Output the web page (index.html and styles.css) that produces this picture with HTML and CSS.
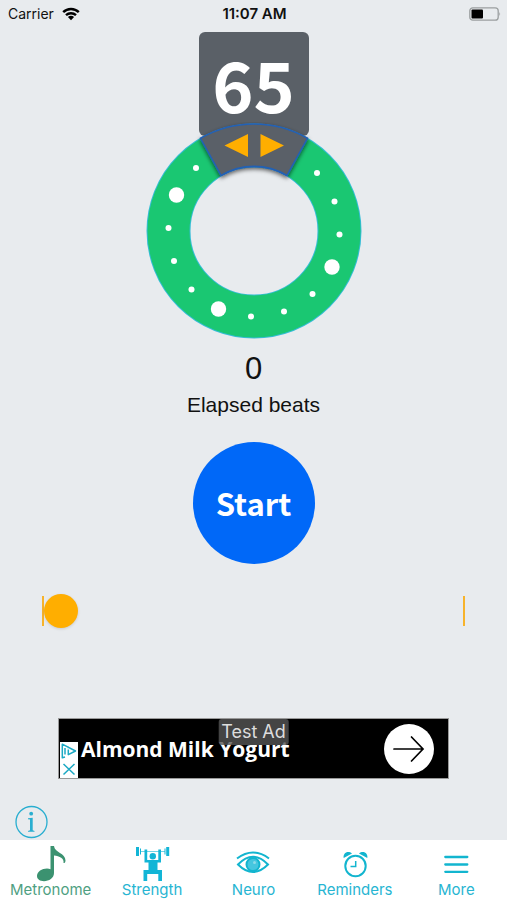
FILE: index.html
```html
<!DOCTYPE html>
<html lang="en">
<head>
<meta charset="utf-8">
<meta name="viewport" content="width=device-width, initial-scale=1">
<title>Metronome</title>
<link rel="stylesheet" href="styles.css">
</head>
<body>
<div class="app">
  <header class="status">
    <div class="status-left">
      <span>Carrier</span>
      <svg width="18" height="14" viewBox="0 0 18 14" aria-hidden="true">
        <g fill="none" stroke="#000" stroke-width="2.4">
          <path d="M1.2 5.2C5.5 .9 12.500 .9 16.800 5.200"/>
          <path d="M4 8.200C6.800 5.500 11.200 5.500 14 8.200"/>
        </g>
        <path d="M5.900 10C7.600 8.400 10.400 8.400 12.100 10L9 13.200Z"/>
      </svg>
    </div>
    <time class="clock">11:07 AM</time>
    <svg class="battery" width="32" height="14" viewBox="0 0 32 14" role="img" aria-label="Battery">
      <rect x=".8" y=".8" width="28.400" height="12.400" rx="3" fill="none" stroke="#9b9fa0" stroke-width="1.300"/>
      <rect x="2.500" y="2.500" width="11.500" height="9" rx="1"/>
      <path d="M30.300 4.800q1.700 2.200 0 4.400z" fill="#9b9fa0"/>
    </svg>
  </header>

  <main class="metronome">
    <output class="tempo">65</output>
    <svg class="dial" width="216" height="220" viewBox="-108 -109 216 220" role="img" aria-label="Tempo dial">
      <defs>
        <filter id="shade" x="-20%" y="-20%" width="140%" height="150%">
          <feDropShadow dx="0" dy="2" stdDeviation="2" flood-color="#000" flood-opacity=".6"/>
        </filter>
      </defs>
      <circle r="85.500" fill="none" stroke="#35bdd6" stroke-width="44"/>
      <circle r="85.500" fill="none" stroke="#1ac772" stroke-width="42"/>
      <g fill="#fff">
        <circle cx="-77.500" cy="-36" r="7.700"/>
        <circle cx="78" cy="36" r="7.700"/>
        <circle cx="-35.500" cy="78" r="7.700"/>
        <circle cx="-58" cy="-63" r="3"/>
        <circle cx="-85.500" cy="-3" r="3"/>
        <circle cx="-80" cy="30" r="3"/>
        <circle cx="-62.500" cy="58.500" r="3"/>
        <circle cx="-3" cy="85.500" r="3"/>
        <circle cx="30" cy="80.500" r="3"/>
        <circle cx="58.500" cy="63" r="3"/>
        <circle cx="85.500" cy="3.500" r="3"/>
        <circle cx="80.500" cy="-29.500" r="3"/>
        <circle cx="63" cy="-58" r="3"/>
      </g>
      <path d="M-53.500 -92.700A107 107 0 0 1 53.500 -92.700L33 -55.500A64 64 0 0 0 -33 -55.500Z" fill="#5a6067" stroke="#2461b5" stroke-width="1.600" filter="url(#shade)"/>
      <path d="M-29.500 -85.500L-6 -97V-74Z M30 -85.500L6.500 -97V-74Z" fill="#ffae00"/>
    </svg>
    <output class="beats" id="beats">0</output>
    <label class="beats-label" for="beats">Elapsed beats</label>
    <button class="start" type="button">Start</button>
    <div class="slider">
      <input type="range" min="0" max="100" value="0" aria-label="Beat position">
    </div>
  </main>

  <aside class="ad">
    <div class="ad-choices">
      <svg width="16" height="16" viewBox="0 0 16 16" fill="none" stroke="#1ba9c4" stroke-width="1.500" stroke-linejoin="round" aria-hidden="true">
        <path d="M4 14L1.300 14.800V1.200L14.500 8L7.300 11.700V6.500M7.300 3.500V5.200M4 11.500V5"/>
      </svg>
      <svg width="16" height="16" viewBox="0 0 16 16" fill="none" stroke="#1ba9c4" stroke-width="1.500" aria-hidden="true">
        <path d="M2.500 3L13.500 13.500M13.500 3L2.500 13.500"/>
      </svg>
    </div>
    <a class="ad-title" href="#ad">Almond Milk Yogurt</a>
    <a class="ad-go" href="#ad" aria-label="Open ad">
      <svg width="32" height="28" viewBox="0 0 32 28" fill="none" stroke="#000" stroke-width="1.700" stroke-linecap="round" aria-hidden="true">
        <path d="M1 14H30M18.500 2L30 14L18.500 26"/>
      </svg>
    </a>
    <span class="ad-badge">Test Ad</span>
  </aside>

  <button class="info" type="button" aria-label="Information">
    <svg width="34" height="34" viewBox="0 0 34 34" aria-hidden="true">
      <circle cx="17.500" cy="17" r="15.500" fill="none" stroke="#29aed0" stroke-width="1.300"/>
      <circle cx="17.200" cy="8.700" r="1.900" fill="#29aed0"/>
      <path d="M14 13.300L18.700 12.800V25.200L20.500 26V26.800H14V26L16 25.200V14.600L14 14.200Z" fill="#29aed0"/>
    </svg>
  </button>

  <nav class="tabs">
    <a class="tab current" href="#metronome" aria-current="page">
      <svg width="36" height="38" viewBox="0 0 36 38" fill="#3b9270" aria-hidden="true">
        <path d="M17.500 2H21C21.500 8.500 32.500 9 32.500 16.500Q32.500 18.300 31.500 19H30.500C31.500 14.500 26.500 12 21 11.500V29C21 34 16 37.200 11 37.200C7 37.200 4 35.200 4 32C4 27.500 9 24.500 14 24.500Q16 24.500 17.500 25.300Z"/>
      </svg>
      <span>Metronome</span>
    </a>
    <a class="tab" href="#strength">
      <svg width="36" height="38" viewBox="0 0 36 38" fill="#12b5d6" aria-hidden="true">
        <path d="M2 3H5V12H2ZM6 4.500H7V10.500H6ZM30.500 4.500H31.500V10.500H30.500ZM32.200 3H35.200V12H32.200Z"/>
        <path d="M7 7H31V8H7Z" opacity=".6"/>
        <circle cx="18.800" cy="12.300" r="3.200"/>
        <path d="M10.500 5.500H13.200V16H24.300V5.500H27V18.500H23.500V26H28V37H24.300V30H13.200V37H9.500V26H14.500V18.500H10.500Z"/>
      </svg>
      <span>Strength</span>
    </a>
    <a class="tab" href="#neuro">
      <svg width="36" height="38" viewBox="0 0 36 38" fill="none" stroke="#12b5cf" stroke-width="2" aria-hidden="true">
        <path d="M2 14.500Q18 2.500 34 14.500"/>
        <path d="M3 20.500Q18 5 33 20.500Q18 35.500 3 20.500Z"/>
        <circle cx="18" cy="20.500" r="6.500" fill="#45c6df"/>
        <circle cx="19.500" cy="18.500" r="1.500" fill="#8bdcea" stroke="none"/>
      </svg>
      <span>Neuro</span>
    </a>
    <a class="tab" href="#reminders">
      <svg width="36" height="38" viewBox="0 0 36 38" fill="none" stroke="#12b5cf" stroke-width="2" aria-hidden="true">
        <circle cx="18.500" cy="22" r="10.200"/>
        <path d="M18.700 17V22.500H13.500" stroke-width="1.500"/>
        <path d="M6.700 14C5.700 9.500 10.500 6 15 9.500ZM30.300 14C31.300 9.500 26.500 6 22 9.500Z" fill="#12b5cf" stroke="none"/>
      </svg>
      <span>Reminders</span>
    </a>
    <a class="tab" href="#more">
      <svg width="36" height="38" viewBox="0 0 36 38" fill="none" stroke="#12b5cf" stroke-width="2.300" stroke-linecap="round" aria-hidden="true">
        <path d="M7.300 13H29.300M7.300 20.500H29.300M7.300 27.800H29.300"/>
      </svg>
      <span>More</span>
    </a>
  </nav>
</div>
</body>
</html>
```

FILE: styles.css
```css
* {
  box-sizing: border-box;
}

body {
  margin: 0;
  background: #e8ebee;
  color: #111;
  font-family: Inter, "Liberation Sans", sans-serif;
}

svg {
  display: block;
}

a {
  text-decoration: none;
}

button {
  padding: 0;
  border: 0;
  font: inherit;
  cursor: pointer;
}

.app {
  display: flex;
  flex-direction: column;
  min-height: 100vh;
}

.status {
  display: grid;
  grid-template-columns: 1fr auto 1fr;
  align-items: center;
  height: 27px;
  padding: 0 6px 0 8px;
  font-size: 14px;
}

.status-left {
  display: flex;
  align-items: center;
  gap: 8px;
}

.clock {
  font-size: 15px;
  font-weight: 600;
}

.battery {
  justify-self: end;
}

.metronome {
  display: flex;
  flex: 1;
  flex-direction: column;
  align-items: center;
  padding: 5px 42px 0;
}

.tempo {
  width: 110px;
  height: 104px;
  border-radius: 6px;
  background: #5a6067;
  color: #fff;
  font: 700 70px/102px "Noto Sans CJK JP", sans-serif;
  text-align: center;
}

.dial {
  position: relative;
  margin-top: -14px;
}

.beats {
  margin-top: 9px;
  font: 31px/36px "Liberation Sans", sans-serif;
}

.beats-label {
  margin-top: 6px;
  font: 21px/24px "Liberation Sans", sans-serif;
}

.start {
  width: 122px;
  height: 122px;
  margin-top: 25px;
  border-radius: 50%;
  background: #0068f8;
  color: #fff;
  font: 700 31px/40px "Noto Sans CJK JP", sans-serif;
}

.slider {
  display: flex;
  align-items: center;
  align-self: stretch;
  height: 30px;
  margin-top: 32px;
  border: solid #f7b32b;
  border-width: 0 2px;
}

.slider input {
  width: 100%;
  height: 34px;
  margin: 0;
  background: transparent;
  appearance: none;
}

.slider input::-webkit-slider-thumb {
  width: 34px;
  height: 34px;
  border-radius: 50%;
  background: #ffae00;
  box-shadow: 0 1px 3px #0002;
  appearance: none;
}

.ad {
  display: flex;
  position: relative;
  align-items: center;
  align-self: center;
  width: calc(100% - 116px);
  height: 61px;
  padding: 0 14px 0 1px;
  border: 1px solid #999;
  background: #000;
}

.ad-choices {
  display: flex;
  flex-direction: column;
  align-self: flex-end;
  gap: 2px;
  width: 18px;
  padding: 1px;
  background: #fff;
}

.ad-title {
  flex: 1;
  margin-left: 3px;
  color: #fff;
  font: 700 21px/28px "Open Sans", sans-serif;
}

.ad-go {
  display: grid;
  place-items: center;
  width: 50px;
  height: 50px;
  border-radius: 50%;
  background: #fff;
}

.ad-badge {
  position: absolute;
  top: 0;
  left: 50%;
  padding: 0 3px;
  border-radius: 3px;
  background: #555c;
  color: #ddd;
  font: 18px/26px Inter, sans-serif;
  transform: translateX(-50%);
}

.info {
  align-self: flex-start;
  margin: 26px 0 1px 14px;
  background: transparent;
}

.tabs {
  display: grid;
  grid-template-columns: repeat(5, 1fr);
  height: 60px;
  background: #fff;
}

.tab {
  display: flex;
  flex-direction: column;
  align-items: center;
  padding-top: 4px;
  color: #27b5d2;
  font-size: 15px;
  line-height: 16px;
}

.tab.current {
  color: #4f9f82;
}
```
